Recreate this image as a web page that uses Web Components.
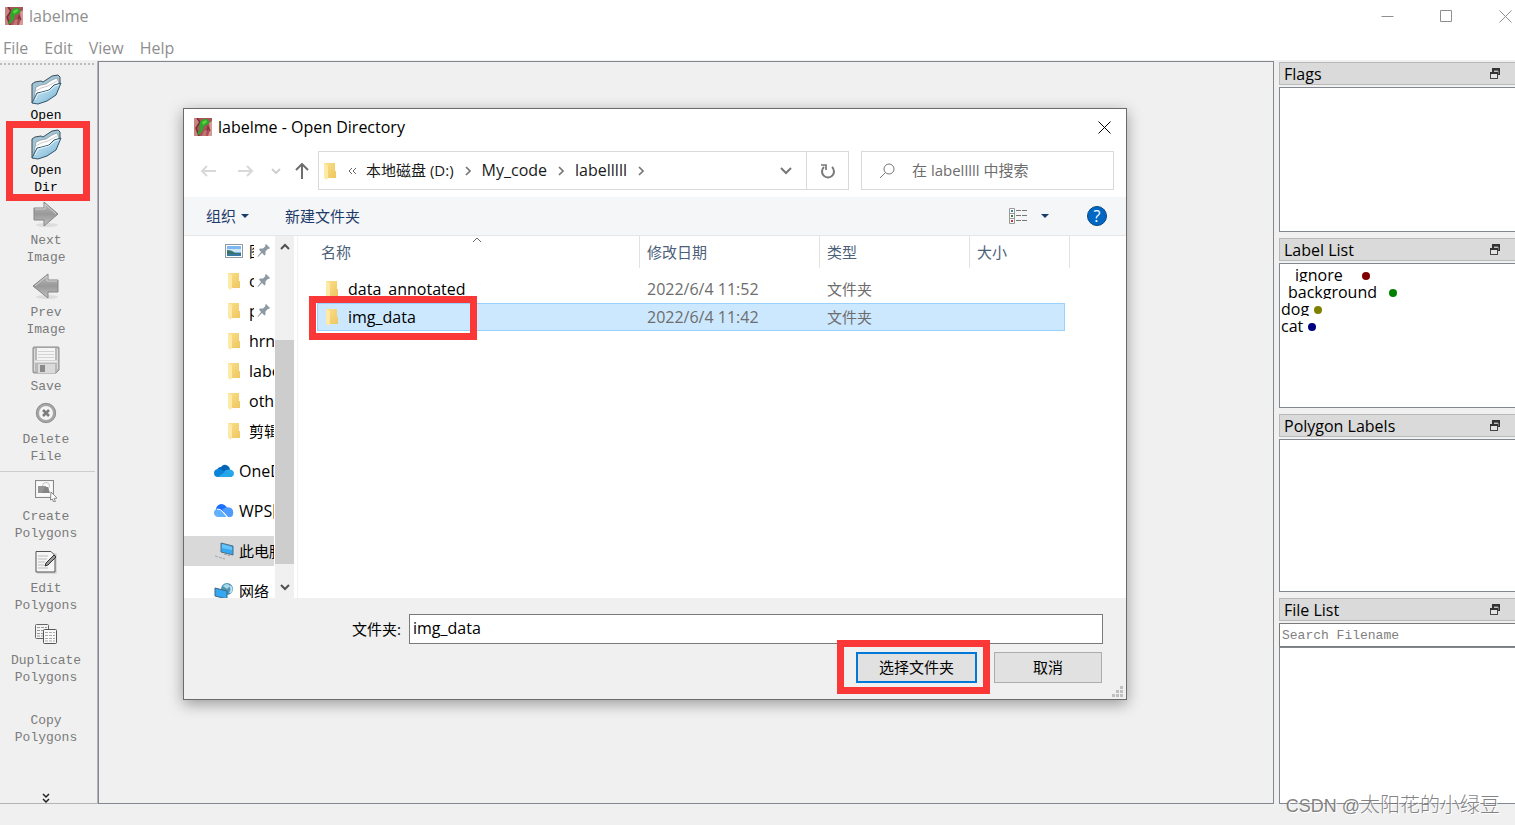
<!DOCTYPE html>
<html lang="zh-CN">
<head>
<meta charset="utf-8">
<title>labelme</title>
<style>
  body { margin: 0; background: #f0f0f0; font: 16px/20px "Open Sans", "Noto Sans CJK SC", sans-serif; color: #000; }
</style>
</head>
<body>
<label-app></label-app>
<script>
const ICONS = {
  app: [18, 18, `<rect width="18" height="18" fill="#a8525a"/><path d="M0 0h3l2 5-3 4 2 9H0z" fill="#c98480"/><path d="M3 0l3 4-4 6 3 8" stroke="#7d2c3a" stroke-width="1.500" fill="none"/><path d="M15 5l3-2v15h-4l2-6z" fill="#d89a94"/><path d="M11 18l3-9 2 4" stroke="#8c3341" stroke-width="1.500" fill="none"/><path d="M8 18l2-5 3-1-1 6z" fill="#c47572"/><path d="M6 4l3-3 4 0 3 3-3 3-3 1-1 4-4 5-2-1 3-5-1-1z" fill="#2fa52c"/><path d="M8 4l4-2 1 2-4 3z" fill="#5ad53b"/>`],
  folderOpen: [32, 32, `<defs><linearGradient id="g" x1="0" y1="0" x2="1" y2="1"><stop offset="0" stop-color="#d8edf6"/><stop offset=".6" stop-color="#9ccbe3"/><stop offset="1" stop-color="#5b9cc0"/></linearGradient></defs><path d="M2 30V11l3-2 6-1 2 1 9-6 6-1 2 2 0 6-9 9z" fill="#9fc5d9" stroke="#3f4d56"/><path d="M4 25l2-11 5-2 5-1 6-4 5-2 2 5-3 5-17 9z" fill="#fff" stroke="#8b8f92" stroke-width=".7"/><path d="M6 18l5-3 7-2 9-5" stroke="#c9cccd" fill="none"/><path d="M2 30l5-10 5-1 7-2 5-5 7-2-5 12-9 6-9 3z" fill="url(#g)" stroke="#35566a"/><path d="M5 27l3-6 11-3 6-5 4-1" stroke="#e4f5fc" fill="none"/>`],
  next: [28, 28, `<defs><linearGradient id="g" x1="0" y1="0" x2="0" y2="1"><stop offset="0" stop-color="#bdbdbd"/><stop offset=".5" stop-color="#999"/><stop offset="1" stop-color="#c3c3c3"/></linearGradient></defs><ellipse cx="15" cy="25" rx="11" ry="2" fill="#ddd"/><path d="M2 8h10V2l14 12-14 12v-6H2z" fill="url(#g)" stroke="#858585"/><path d="M3 9h10V4l11 10" stroke="#d0d0d0" fill="none"/>`],
  prev: [28, 28, `<defs><linearGradient id="g" x1="0" y1="0" x2="0" y2="1"><stop offset="0" stop-color="#bdbdbd"/><stop offset=".5" stop-color="#999"/><stop offset="1" stop-color="#c3c3c3"/></linearGradient></defs><ellipse cx="15" cy="25" rx="11" ry="2" fill="#ddd"/><path d="M26 8H16V2L1 14l15 12v-6h10z" fill="url(#g)" stroke="#858585"/><path d="M25 9H15V4L3 14" stroke="#d0d0d0" fill="none"/>`],
  save: [28, 28, `<path d="M1 2q0-1 1-1h24q1 0 1 1v22l-3 3H2q-1 0-1-1z" fill="#b9b9b9" stroke="#8b8b8b"/><rect x="5" y="2" width="18" height="12" fill="#f4f4f4"/><path d="M6 5.500h16M6 8.500h16M6 11.500h16" stroke="#d2d2d2"/><path d="M3 15.500h22" stroke="#efefef" stroke-width="2"/><rect x="6" y="18" width="17" height="9" fill="#dadada"/><rect x="8" y="19" width="5" height="7" fill="#8a8a8a"/><path d="M2.500 3v22M25.500 3v20" stroke="#dadada"/>`],
  remove: [22, 22, `<circle cx="11" cy="11" r="8.500" fill="#f4f4f4" stroke="#a6a6a6" stroke-width="3"/><circle cx="11" cy="11" r="9.700" fill="none" stroke="#7f7f7f" stroke-width=".7"/><path d="M8 8l6 6M14 8l-6 6" stroke="#7d7d7d" stroke-width="2.500"/>`],
  create: [24, 24, `<rect x="3" y="4" width="15" height="14" fill="#fafafa"/><rect x="1.500" y="2.500" width="18" height="17" fill="none" stroke="#222" stroke-dasharray="1 1"/><circle cx="12" cy="8" r="3.500" fill="none" stroke="#c4c4c4"/><rect x="4" y="8" width="8" height="7" fill="#959595"/><path d="M8 15l3-6h3l2 6z" fill="#858585"/><path d="M17 14l6 6-3 .5 1.500 3-2 .5-1-3-2 1z" fill="#fff" stroke="#888"/>`],
  edit: [24, 24, `<rect x="3" y="3" width="20" height="21" rx="1" fill="#d9d9d9"/><path d="M2 1.500h15l4 4V22H2z" fill="#f6f6f6" stroke="#555"/><path d="M4 6h10M4 9h9M4 12h7M4 15h6M4 18h10" stroke="#bbb"/><path d="M20 5l2 2-8 8-3 1 1-3z" fill="#999" stroke="#333"/>`],
  copy: [24, 24, `<rect x="1.500" y="2.500" width="13" height="14" rx="1" fill="#f4f4f4" stroke="#666"/><path d="M3 5.500h10M3 8.500h6M3 11.500h6M3 14h6" stroke="#999" stroke-dasharray="3 1"/><rect x="9.500" y="7.500" width="13" height="14" rx="1" fill="#fafafa" stroke="#555"/><path d="M11 10.500h10M11 13.500h10M11 16.500h10M11 19h10" stroke="#aaa" stroke-dasharray="3 1"/>`],
  more: [8, 10, `<path d="M1 1l3 3 3-3M1 6l3 3 3-3" fill="none" stroke="#222" stroke-width="1.500"/>`],
  folder: [14, 18, `<defs><linearGradient id="g" x1="0" y1="0" x2="1" y2="1"><stop offset="0" stop-color="#fbe08c"/><stop offset="1" stop-color="#eec65f"/></linearGradient></defs><path d="M1 1h11v8h1v7H1z" fill="url(#g)"/><path d="M1 1l4 2v12l-1 3-3-2z" fill="#ffe9a6"/>`],
  picture: [18, 14, `<rect x=".5" y=".5" width="17" height="13" fill="#fff" stroke="#929ba1"/><path d="M2 2h14v10H2z" fill="#7db8f0"/><path d="M2 5h14v3H2z" fill="#cfe6f7"/><path d="M2 6q5 0 8 3h6v3H2z" fill="#3a7468"/><path d="M2 10h14v2H2z" fill="#357aa5"/>`],
  pin: [14, 14, `<path d="M8 1l1-1 4 4-1 1-1-.3-2.500 2.800 0 3-1 1-2.500-2.500L1 13l-.5-.5L4 8 2 5.500l1-1h3L8.500 2z" fill="#8d9aa3"/>`],
  onedrive: [20, 14, `<path d="M3 6q1-3 4-3 3-4 7-1 2 1 2 4l-8 3z" fill="#0364b8"/><path d="M8 9l4-3q7-2 8 3 0 4-4 4H5z" fill="#28a8ea"/><path d="M4 13q-4 0-4-4 0-4 5-4 3 0 6 3l7 4q-1 1-3 1z" fill="#0a84d8"/><path d="M4 13l7-5 7 4q-1 1-3 1z" fill="#28a8ea"/>`],
  wps: [20, 14, `<path d="M2 6q0-5 5-6 4 0 6 4l-2 4z" fill="#1f6fff"/><path d="M9 5q4-3 8-1 3 2 2 6 0 3-3 3h-2L8 6z" fill="#4d9bff"/><path d="M4 13q-4-1-4-4 0-4 4-4 3 0 5 3l4 5z" fill="#62b0ff"/><path d="M3 5q4 0 6 3l5 6" stroke="#fff" fill="none"/>`],
  pc: [20, 18, `<path d="M7 1l12 3v9L7 10z" fill="#35a8f4" stroke="#536e7e"/><path d="M8 2l10 3v3L8 6z" fill="#66c3ff"/><path d="M10 12l6 2M1 14l10 3" stroke="#9da7ad" stroke-dasharray="3 1"/>`],
  network: [20, 18, `<circle cx="13" cy="7" r="6" fill="#4c95b7"/><path d="M9 4q4-4 7 0l-3 3z" fill="#acd7e8"/><path d="M16 4q3 3 0 7" stroke="#bee2ef" fill="none" stroke-width="2"/><path d="M1 6l12 3v8L1 14z" fill="#35a8f4" stroke="#42657a"/>`],
  back: [16, 14, `<path d="M16 7H2M7 2L2 7l5 5" fill="none" stroke="#d9d9d9" stroke-width="2"/>`],
  forward: [16, 14, `<path d="M0 7h14M9 2l5 5-5 5" fill="none" stroke="#d9d9d9" stroke-width="2"/>`],
  recent: [10, 6, `<path d="M1 1l4 4 4-4" fill="none" stroke="#cfcfcf" stroke-width="2"/>`],
  up: [14, 16, `<path d="M7 16V2M1 7l6-6 6 6" fill="none" stroke="#6e6e6e" stroke-width="2"/>`],
  chevR: [6, 10, `<path d="M1 1l4 4-4 4" fill="none" stroke="#777" stroke-width="1.700"/>`],
  chevD: [12, 8, `<path d="M1 1l5 5 5-5" fill="none" stroke="#777" stroke-width="2"/>`],
  dblLeft: [8, 8, `<path d="M4 1L1 4l3 3M8 1L5 4l3 3" fill="none" stroke="#666"/>`],
  refresh: [16, 16, `<path d="M4 4a6 6 0 1 0 8 0" fill="none" stroke="#777" stroke-width="2"/><path d="M1 2h5v5" fill="none" stroke="#777" stroke-width="1.700"/>`],
  search: [16, 16, `<circle cx="10" cy="6" r="5" fill="none" stroke="#777"/><path d="M6.500 9.500L1 15" stroke="#777"/>`],
  caret: [8, 4, `<path d="M0 0h8L4 4z" fill="#1e3c6b"/>`],
  view: [20, 16, `<path d="M.5.5h5v15h-5zM.5 5.500h5M.5 10.500h5" fill="#fff" stroke="#999"/><path d="M2 2h2v2H2z" fill="#3b7fb5"/><path d="M2 7h2v2H2z" fill="#447744"/><path d="M2 12h2v2H2z" fill="#c33"/><path d="M7 2.500h12M7 7.500h12M7 12.500h12" stroke="#777" stroke-dasharray="5 1"/>`],
  sort: [10, 6, `<path d="M1 5l4-4 4 4" fill="none" stroke="#666"/>`],
  scrollUp: [12, 8, `<path d="M2 7l4-4 4 4" fill="none" stroke="#505050" stroke-width="2"/>`],
  scrollDown: [12, 8, `<path d="M2 1l4 4 4-4" fill="none" stroke="#505050" stroke-width="2"/>`],
  close: [13, 13, `<path d="M.5.5l12 12M12.500.5l-12 12" stroke="currentColor"/>`],
  minimize: [13, 13, `<path d="M.5 6.500h12" stroke="currentColor"/>`],
  maximize: [13, 13, `<path d="M.5.500h11v11H.5z" fill="none" stroke="currentColor"/>`],
  float: [10, 11, `<path d="M2 0h8v7H7V5H8V3H4V4H2z" fill="#333"/><path d="M4 3h4v3" stroke="#aaa" fill="none"/><rect x=".5" y="4.500" width="7" height="6" fill="#e4e4e4" stroke="#444"/><path d="M0 5h8" stroke="#333" stroke-width="2"/>`],
  grip: [11, 11, `<path d="M8 0h3v3H8zM4 4h3v3H4zM8 4h3v3H8zM0 8h3v3H0zM4 8h3v3H4zM8 8h3v3H8z" fill="#bfbfbf"/>`]
};

const RESET = `
  :host { box-sizing: border-box; }
  *, *::before { box-sizing: border-box; }
  button, input { font: inherit; color: inherit; margin: 0; padding: 0; border: 0; background: none; outline: 0; border-radius: 0; }
  a { color: inherit; text-decoration: none; }`;

function define(name, css, html) {
  customElements.define(name, class extends HTMLElement {
    constructor() {
      super();
      const markup = typeof html === "function" ? html(this) : html;
      this.attachShadow({ mode: "open" }).innerHTML = `<style>${RESET}${css}</style>${markup}`;
    }
  });
}

define("ui-icon", `:host { display: inline-block; flex: none; line-height: 0; } svg { display: block; }`, el => {
  const [w, h, body] = ICONS[el.getAttribute("name")];
  return `<svg width="${w}" height="${h}" viewBox="0 0 ${w} ${h}" aria-hidden="true">${body}</svg>`;
});

define("highlight-frame", `
  :host { position: absolute; border: 7px solid #fb3838; pointer-events: none; z-index: 2; }`, `<slot></slot>`);

define("tool-button", `
  :host { display: block; position: relative; margin-top: 4px; color: #7b7b7b; }
  :host([active]) { color: #000; }
  :host([gap="small"]) { margin-top: 2px; }
  :host([gap="large"]) { margin-top: 6px; }
  button { display: block; width: 92px; font: 13px/17px "Liberation Mono", monospace; text-align: center; }
  .icon { display: flex; height: 34px; padding-bottom: 2px; align-items: center; justify-content: center; }
  :host([blank]) .icon { height: 22px; }
  .text { display: block; white-space: pre-line; }
  ::slotted(highlight-frame) { inset: -7px 7px -5px 6px; }`,
  el => `<button type="button"><span class="icon">${el.hasAttribute("icon") ? `<ui-icon name="${el.getAttribute("icon")}"></ui-icon>` : ""}</span><span class="text">${el.getAttribute("label").replace(" ", "\n")}</span></button><slot></slot>`);

define("tool-bar", `
  :host { display: flex; flex-direction: column; width: 98px; flex: none; border-right: 1px solid #b4b4b4; border-bottom: 1px solid #b4b4b4; padding-top: 2px; }
  .handle { width: 96px; height: 2px; background: repeating-linear-gradient(90deg, #bbb 0 2px, transparent 2px 4px); }
  .items { padding-top: 4px; }
  hr { border: 0; height: 1px; width: 95px; margin: 6px 0 0; background: #ccc; }
  .more { width: 92px; margin-top: auto; line-height: 0; }`, `
  <div class="handle"></div>
  <div class="items">
    <tool-button active icon="folderOpen" label="Open"></tool-button>
    <tool-button active icon="folderOpen" label="Open Dir"><highlight-frame></highlight-frame></tool-button>
    <tool-button gap="small" icon="next" label="Next Image"></tool-button>
    <tool-button icon="prev" label="Prev Image"></tool-button>
    <tool-button gap="large" icon="save" label="Save"></tool-button>
    <tool-button gap="small" icon="remove" label="Delete File"></tool-button>
    <hr>
    <tool-button gap="small" icon="create" label="Create Polygons"></tool-button>
    <tool-button icon="edit" label="Edit Polygons"></tool-button>
    <tool-button icon="copy" label="Duplicate Polygons"></tool-button>
    <tool-button blank label="Copy Polygons"></tool-button>
  </div>
  <button class="more" type="button" aria-label="More tools"><ui-icon name="more"></ui-icon></button>`);

define("dock-panel", `
  :host { display: flex; flex-direction: column; min-height: 0; }
  header { display: flex; align-items: center; justify-content: space-between; height: 23px; flex: none; margin-bottom: 2px; padding: 0 15px 0 4px; background: #dadada; border: 1px solid #b9b9b9; border-right: 0; }
  h2 { margin: 0; font: inherit; line-height: 21px; padding-top: 1px; }
  header button { line-height: 0; }
  .body { flex: 1; min-height: 0; background: #fff; border: 1px solid #828790; border-right: 0; padding: 1px; }`,
  el => `<header><h2>${el.getAttribute("heading")}</h2><button type="button" aria-label="Float panel"><ui-icon name="float"></ui-icon></button></header><slot name="filter"></slot><div class="body"><slot></slot></div>`);

define("label-item", `
  :host { display: flex; height: 17px; overflow: hidden; line-height: 20px; }
  i { width: 8px; height: 8px; margin: 7px 0 0 5px; border-radius: 50%; background: var(--dot); }
  :host([indent="1"]) { padding-left: 7px; } :host([indent="1"]) i { margin-left: 12px; }
  :host([indent="2"]) { padding-left: 14px; } :host([indent="2"]) i { margin-left: 19px; }`, `<span><slot></slot></span><i></i>`);

define("dock-area", `
  :host { display: grid; grid-template-rows: 170fr 170fr 178fr 206fr; gap: 6px; width: 236px; flex: none; padding-top: 1px; }
  input { display: block; height: 24px; width: 100%; padding: 1px 0 0 2px; background: #fff; border: 1px solid #7a7a7a; border-right: 0; font: 13px/17px "Liberation Mono", monospace; }
  input::placeholder { color: #7f7f7f; opacity: 1; }`, `
  <dock-panel heading="Flags"></dock-panel>
  <dock-panel heading="Label List">
    <label-item indent="2" style="--dot:#800000">ignore</label-item>
    <label-item indent="1" style="--dot:#008000">background</label-item>
    <label-item style="--dot:#808000">dog</label-item>
    <label-item style="--dot:#000080">cat</label-item>
  </dock-panel>
  <dock-panel heading="Polygon Labels"></dock-panel>
  <dock-panel heading="File List"><input slot="filter" type="text" placeholder="Search Filename" aria-label="Search Filename"></dock-panel>`);

define("nav-item", `
  :host { display: flex; align-items: center; height: 30px; flex: none; padding-left: 40px; overflow: hidden; white-space: nowrap; }
  :host([root]) { padding-left: 30px; margin-top: 10px; }
  :host([selected]) { background: #d9d9d9; }
  :host(:lang(zh)) { font-size: 15px; }
  a { display: flex; align-items: center; }
  .ico { width: 20px; display: flex; justify-content: center; margin-right: 5px; }
  .name { overflow: hidden; }
  :host([pinned]) .name { width: 5px; margin-right: 3px; }`,
  el => `<a href="#"><span class="ico"><ui-icon name="${el.getAttribute("icon")}"></ui-icon></span><span class="name"><slot></slot></span>${el.hasAttribute("pinned") ? `<ui-icon name="pin"></ui-icon>` : ""}</a>`);

define("nav-pane", `
  :host { display: flex; width: 114px; flex: none; border-right: 1px solid #f3f3f3; overflow: hidden; }
  nav { display: flex; flex-direction: column; width: 90px; overflow: hidden; }
  .scroll { display: flex; flex-direction: column; align-items: center; width: 19px; margin-left: 1px; background: #f0f0f0; padding: 6px 0; }
  .thumb { flex: 1; width: 19px; margin: 90px 0 20px; background: #cdcdcd; }`, `
  <nav>
    <nav-item pinned icon="picture">图</nav-item>
    <nav-item lang="en" pinned icon="folder">c</nav-item>
    <nav-item lang="en" pinned icon="folder">p</nav-item>
    <nav-item lang="en" icon="folder">hrne</nav-item>
    <nav-item lang="en" icon="folder">labe</nav-item>
    <nav-item lang="en" icon="folder">oth</nav-item>
    <nav-item icon="folder">剪辑</nav-item>
    <nav-item lang="en" root icon="onedrive">OneD</nav-item>
    <nav-item lang="en" root icon="wps">WPS网</nav-item>
    <nav-item root selected icon="pc">此电脑</nav-item>
    <nav-item root icon="network">网络</nav-item>
  </nav>
  <div class="scroll"><ui-icon name="scrollUp"></ui-icon><div class="thumb"></div><ui-icon name="scrollDown"></ui-icon></div>`);

define("file-table", `
  :host { display: block; flex: 1; min-width: 0; padding-left: 19px; overflow: hidden; font-size: 15px; }
  table { border-collapse: separate; border-spacing: 0; table-layout: fixed; width: 753px; }
  th, td { text-align: left; font-weight: normal; white-space: nowrap; }
  th { height: 32px; padding: 0 0 0 7px; color: #4c607a; border-right: 1px solid #e2e2e2; }
  th:first-child { position: relative; padding-left: 4px; }
  th ui-icon { position: absolute; left: 50%; top: 1px; margin-left: -6px; }
  .space td { height: 7px; padding: 0; }
  td { height: 28px; padding: 0 0 0 7px; color: #6d6d6d; }
  td:first-child { position: relative; padding-left: 8px; color: #000; }
  td:nth-child(-n+2) { font-size: 16px; }
  .name { display: flex; align-items: center; gap: 9px; }
  td:last-child { border-right: 5px solid transparent; background-clip: padding-box; }
  .selected td { background-color: #cce8ff; box-shadow: inset 0 1px #99d1ff, inset 0 -1px #99d1ff; }
  .selected td:first-child { box-shadow: inset 1px 1px #99d1ff, inset 0 -1px #99d1ff; }
  .selected td:last-child { box-shadow: inset -1px 1px #99d1ff, inset 0 -1px #99d1ff; }
  highlight-frame { left: -8px; top: -7px; width: 168px; height: 44px; }`, `
  <table>
    <colgroup><col><col style="width:180px"><col style="width:150px"><col style="width:100px"></colgroup>
    <thead><tr><th>名称<ui-icon name="sort"></ui-icon></th><th>修改日期</th><th>类型</th><th>大小</th></tr></thead>
    <tbody>
      <tr class="space"><td colspan="4"></td></tr>
      <tr><td><span class="name"><ui-icon name="folder"></ui-icon>data_annotated</span></td><td>2022/6/4 11:52</td><td>文件夹</td><td></td></tr>
      <tr class="selected"><td><span class="name"><ui-icon name="folder"></ui-icon>img_data</span><highlight-frame></highlight-frame></td><td>2022/6/4 11:42</td><td>文件夹</td><td></td></tr>
    </tbody>
  </table>`);

define("address-bar", `
  :host { display: flex; align-items: center; height: 39px; margin: 4px 12px 7px 16px; color: #1a1a1a; }
  button { display: flex; align-items: center; justify-content: center; height: 37px; }
  .back, .fwd { width: 16px; margin-right: 22px; } .fwd { margin-right: 17px; }
  .recent { margin-right: 14px; }
  .up { width: 14px; margin-right: 9px; }
  .path { display: flex; align-items: center; flex: 1; height: 39px; border: 1px solid #d9d9d9; padding-left: 4px; white-space: nowrap; }
  .path > ui-icon { margin-right: 11px; }
  .path .dbl { margin-right: 10px; }
  .path .sep { margin: 0 11px; }
  .path a { padding-bottom: 2px; }
  .zh, label { font-size: 15px; }
  .drop { width: 40px; margin-left: auto; }
  .refresh { width: 42px; border-left: 1px solid #d9d9d9; }
  label { display: flex; align-items: center; width: 253px; height: 39px; margin-left: 12px; padding-left: 17px; border: 1px solid #d9d9d9; }
  input { flex: 1; min-width: 0; height: 30px; margin-left: 17px; padding-bottom: 2px; }
  input::placeholder { color: #6d6d6d; opacity: 1; }`, `
  <button class="back" type="button" aria-label="Back"><ui-icon name="back"></ui-icon></button>
  <button class="fwd" type="button" aria-label="Forward"><ui-icon name="forward"></ui-icon></button>
  <button class="recent" type="button" aria-label="Recent"><ui-icon name="recent"></ui-icon></button>
  <button class="up" type="button" aria-label="Up"><ui-icon name="up"></ui-icon></button>
  <div class="path">
    <ui-icon name="folder"></ui-icon><ui-icon class="dbl" name="dblLeft"></ui-icon>
    <a class="zh" href="#">本地磁盘 (D:)</a><ui-icon class="sep" name="chevR"></ui-icon>
    <a href="#">My_code</a><ui-icon class="sep" name="chevR"></ui-icon>
    <a href="#">labelllll</a><ui-icon class="sep" name="chevR"></ui-icon>
    <button class="drop" type="button" aria-label="Previous locations"><ui-icon name="chevD"></ui-icon></button>
    <button class="refresh" type="button" aria-label="Refresh"><ui-icon name="refresh"></ui-icon></button>
  </div>
  <label><ui-icon name="search"></ui-icon><input type="text" placeholder="在 labelllll 中搜索" aria-label="Search"></label>`);

define("file-dialog", `
  :host { display: flex; flex-direction: column; background: #fff; border: 1px solid #6b6b6b; box-shadow: 0 4px 14px rgba(0,0,0,.36); }
  .title { display: flex; align-items: center; height: 38px; flex: none; padding: 0 15px 2px 10px; }
  h1 { flex: 1; margin: 0 0 0 6px; font: inherit; }
  .title button { line-height: 0; }
  .commands { display: flex; align-items: center; height: 39px; flex: none; padding: 0 19px 0 22px; background: #f5f6f7; border-bottom: 1px solid #e5e6e7; color: #1e3c6b; font-size: 15px; }
  .commands button { display: flex; align-items: center; gap: 5px; }
  .new { margin-left: 36px; }
  .view { margin-left: auto; }
  .commands .view { gap: 12px; }
  .commands .help { justify-content: center; width: 20px; height: 20px; margin-left: 38px; border-radius: 50%; background: #0067c5; border: 1px solid #08477f; color: #fff; font-size: 16px; }
  .content { display: flex; flex: 1; min-height: 0; }
  footer { position: relative; flex: none; padding: 16px 23px; background: #f0f0f0; font-size: 15px; }
  .row { display: flex; align-items: center; justify-content: flex-end; }
  .row label { flex: none; width: 194px; margin-right: 8px; text-align: right; }
  .row input { flex: 1; min-width: 0; height: 30px; padding: 0 3px 3px; background: #fff; border: 1px solid #7a7a7a; font-size: 16px; }
  .actions { gap: 17px; margin-top: 8px; padding-right: 1px; }
  .actions button { width: 108px; height: 31px; padding-bottom: 2px; background: #e1e1e1; border: 1px solid #adadad; }
  .pick { position: relative; }
  .actions .pick button { display: block; width: 121px; border: 2px solid #0078d7; }
  highlight-frame { inset: -12px -13px -11px -19px; }
  .grip { position: absolute; right: 3px; bottom: 2px; }`, `
  <div class="title"><ui-icon name="app"></ui-icon><h1>labelme - Open Directory</h1><button type="button" aria-label="Close"><ui-icon name="close"></ui-icon></button></div>
  <address-bar></address-bar>
  <div class="commands">
    <button type="button">组织 <ui-icon name="caret"></ui-icon></button>
    <button class="new" type="button">新建文件夹</button>
    <button class="view" type="button" aria-label="View"><ui-icon name="view"></ui-icon><ui-icon name="caret"></ui-icon></button>
    <button class="help" type="button">?</button>
  </div>
  <div class="content"><nav-pane></nav-pane><file-table></file-table></div>
  <footer>
    <div class="row"><label for="folder">文件夹:</label><input id="folder" type="text" value="img_data"></div>
    <div class="row actions"><span class="pick"><button type="button">选择文件夹</button><highlight-frame></highlight-frame></span><button type="button">取消</button></div>
    <ui-icon class="grip" name="grip"></ui-icon>
  </footer>`);

define("label-app", `
  :host { display: flex; flex-direction: column; min-height: 100vh; position: relative; overflow: hidden; }
  .title { display: flex; align-items: center; height: 32px; padding-left: 5px; background: #fff; color: #8f8f8f; }
  .title span { flex: 1; margin-left: 6px; }
  .controls { display: flex; gap: 46px; margin-right: 3px; }
  .controls button { width: 13px; line-height: 0; }
  .menu { display: flex; gap: 16px; height: 28px; padding: 4px 3px 0; align-items: center; background: #fff; color: #8f8f8f; }
  .menu button { line-height: 20px; }
  .workspace { display: flex; flex: 1; margin-top: 1px; }
  .canvas { position: relative; flex: 1; min-width: 0; margin-right: 5px; border: 1px solid #828790; }
  file-dialog { position: absolute; left: 84px; right: 146px; top: 46px; bottom: 103px; }
  .status { height: 21px; }
  .mark { position: absolute; right: 15px; bottom: 6px; font: 300 20px/26px "Liberation Sans", "Noto Sans CJK SC", sans-serif; color: rgba(110,110,110,.85); text-shadow: 1px 1px #fff; white-space: nowrap; }
  .mark span { font-size: 18px; }`, `
  <div class="title"><ui-icon name="app"></ui-icon><span>labelme</span>
    <div class="controls"><button type="button" aria-label="Minimize"><ui-icon name="minimize"></ui-icon></button><button type="button" aria-label="Maximize"><ui-icon name="maximize"></ui-icon></button><button type="button" aria-label="Close"><ui-icon name="close"></ui-icon></button></div></div>
  <div class="menu"><button type="button">File</button><button type="button">Edit</button><button type="button">View</button><button type="button">Help</button></div>
  <div class="workspace"><tool-bar></tool-bar><main class="canvas"><file-dialog></file-dialog></main><dock-area></dock-area></div>
  <div class="status"></div>
  <div class="mark"><span>CSDN @</span>太阳花的小绿豆</div>`);
</script>
</body>
</html>
